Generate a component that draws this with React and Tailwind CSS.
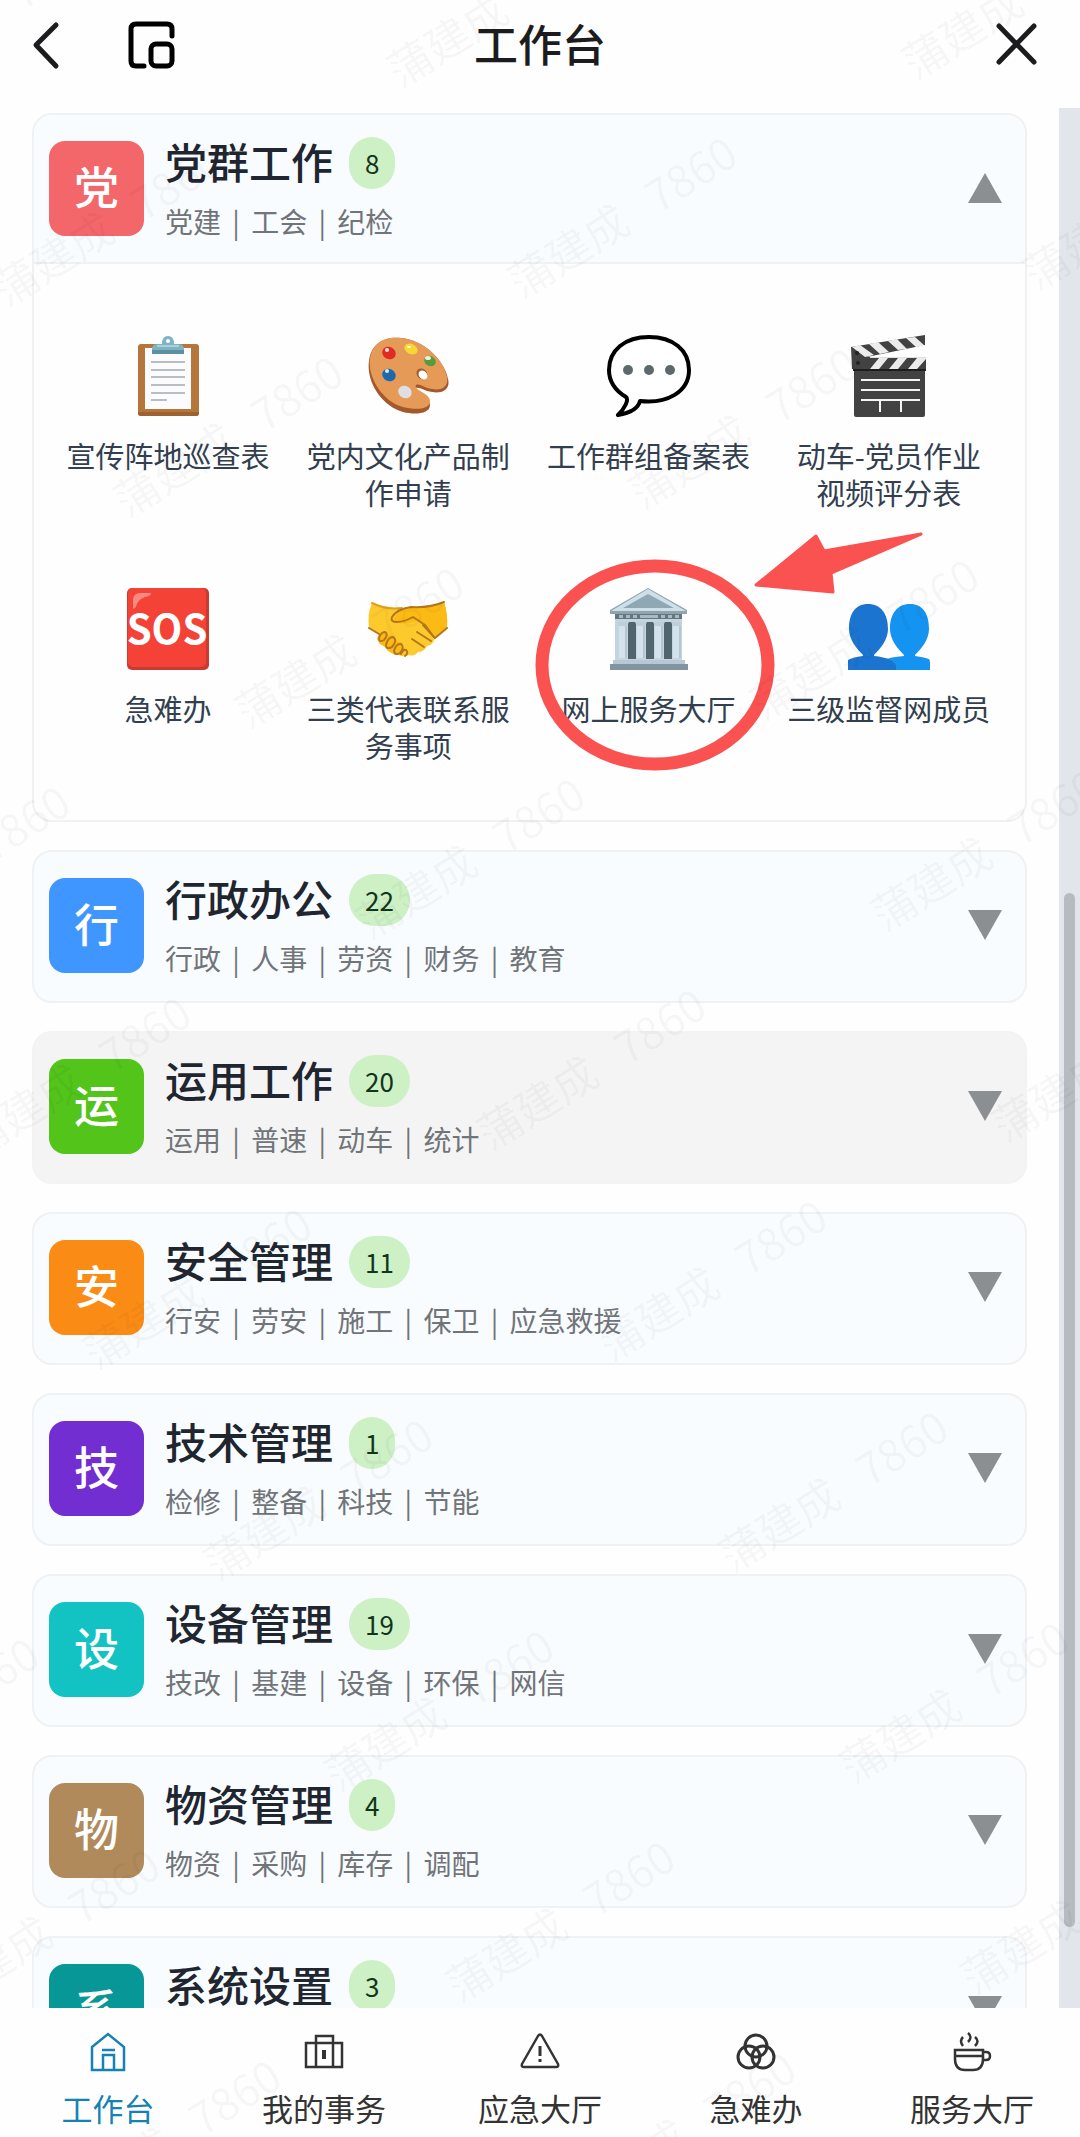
import clsx from "clsx";

const ClipboardIcon = () => (
  <svg viewBox="0 0 82 82" className="size-[82px]" aria-hidden="true">
    <rect x="11" y="9" width="61" height="72" rx="3" fill="#b5763b" />
    <path d="M11 77h61v1a3 3 0 0 1-3 3H14a3 3 0 0 1-3-3z" fill="#9c6330" />
    <rect x="18" y="13" width="46" height="61" fill="#fcfcfe" />
    <g stroke="#b9bec5" strokeWidth="2">
      <path d="M24 27h34M24 35h34M24 42h34M24 50h34M24 58h34M24 65h16" />
    </g>
    <path d="M25 19v-5q0-5 6-5h4q0-8 6-8t6 8h4q6 0 6 5v5z" fill="#7fb3c2" />
    <path d="M25 15h32v4H25z" fill="#5b90a1" />
    <circle cx="41" cy="6" r="2" fill="#fff" />
    <path d="M30 11h22" stroke="#a9d2dc" strokeWidth="2" />
  </svg>
);

const PaletteIcon = () => (
  <svg viewBox="0 0 82 82" className="size-[82px]" aria-hidden="true">
    <path
      d="M2 26C4 8 18 1 34 3c22 2 43 21 47 41 3 11-7 15-16 13-8-1-12-5-16-4-2 5 14 8 14 17 0 9-15 10-27 7C15 71-1 47 2 26z"
      fill="#a4592b"
    />
    <path
      d="M3 23C6 7 18 1 34 3c22 2 42 20 46 39 2 10-6 14-15 12-8-1-12-6-16-4-3 5 14 8 14 16 0 9-15 9-27 6C16 67 0 42 3 23z"
      fill="#e59a57"
    />
    <ellipse cx="22" cy="18" rx="7" ry="6" fill="#e02b25" transform="rotate(30 22 18)" />
    <ellipse cx="44" cy="14" rx="7" ry="5" fill="#f7d733" transform="rotate(25 44 14)" />
    <ellipse cx="63" cy="26" rx="6" ry="5" fill="#589a3c" transform="rotate(30 63 26)" />
    <ellipse cx="22" cy="40" rx="7" ry="6" fill="#1c69ad" transform="rotate(30 22 40)" />
    <ellipse cx="38" cy="57" rx="7" ry="6" fill="#dedfe2" transform="rotate(30 38 57)" />
    <ellipse cx="55" cy="39" rx="6" ry="5" fill="#a4592b" transform="rotate(45 55 39)" />
    <ellipse cx="56" cy="40" rx="5" ry="4" fill="#fff" transform="rotate(45 56 40)" />
    <g fill="#fff" opacity=".85">
      <ellipse cx="20" cy="15" rx="2" ry="2" />
      <ellipse cx="42" cy="12" rx="2" ry="1" />
      <ellipse cx="61" cy="23" rx="3" ry="2" />
      <ellipse cx="20" cy="36" rx="2" ry="2" />
    </g>
  </svg>
);

const SpeechIcon = () => (
  <svg viewBox="0 0 86 82" className="h-[82px] w-[86px]" aria-hidden="true">
    <path
      d="M43 2C19 2 3 15 3 35c0 13 7 21 17 27 3 3-1 11-8 18 12-2 20-6 22-14 27 3 49-9 49-31C83 15 67 2 43 2z"
      fill="#fff"
      stroke="#000"
      strokeWidth="4"
      strokeLinejoin="round"
    />
    <g fill="#5d696b">
      <circle cx="22" cy="35" r="5" />
      <circle cx="43" cy="35" r="5" />
      <circle cx="64" cy="35" r="5" />
    </g>
  </svg>
);

const ClapperIcon = () => (
  <svg viewBox="0 0 82 82" className="size-[82px]" aria-hidden="true">
    <path d="M3 12L77 0v10L19 22v12H4z" fill="#424242" />
    <path d="M5 22h73v12H5z" fill="#424242" />
    <path d="M6 34h71v46q0 2-2 2H8q-2 0-2-2z" fill="#424242" />
    <path
      d="M4 12l8-2 14 10-9 2zM21 9l9-2 11 10-9 2zM40 6l9-2 10 10-9 1zM58 3l9-1 10 9-9 1z"
      fill="#ececec"
    />
    <path d="M78 12v10H22z" fill="#fff" />
    <path d="M31 23h9l-9 11h-9zM50 23h9l-9 11h-9zM69 23h9v1l-9 10h-9z" fill="#ececec" />
    <path d="M22 22h56v1H22z" fill="#e0e0e0" />
    <circle cx="9" cy="18" r="2" fill="#222" />
    <circle cx="10" cy="28" r="2" fill="#222" />
    <path d="M5 35h73" stroke="#1d1d1d" strokeWidth="2" />
    <path d="M13 45h59M13 55h59M13 65h59M32 65v12M53 65v12" stroke="#f5f5f5" strokeWidth="2" fill="none" />
  </svg>
);

const SosIcon = () => (
  <svg viewBox="0 0 82 82" className="size-[82px]" aria-hidden="true">
    <rect width="82" height="82" rx="5" fill="#c93a32" />
    <rect x="1" width="78" height="79" rx="5" fill="#f44336" />
    <path d="M6 21V11q1-6 7-6h11q0 3-6 4-8 3-9 10z" fill="#fa8a80" />
    <text
      x="40"
      y="56"
      textAnchor="middle"
      fontSize="40"
      fontWeight="700"
      fill="#fff"
      fontFamily="'Noto Sans CJK SC', sans-serif"
    >
      SOS
    </text>
  </svg>
);

const HandshakeIcon = () => (
  <svg viewBox="0 0 82 82" className="size-[82px]" aria-hidden="true">
    <path
      d="M5 15q14 7 30 5l10-1q18 1 32-5 4 12 3 26l-13 12q-1 5-7 6-3 6-9 6-4 5-9 3-7 3-12-1-8-1-9-6-6-2-6-7-5-2-3-7L2 40Q0 26 5 15z"
      fill="#fdca2e"
    />
    <path d="M44 19q19 1 33-5 4 12 3 26l-11 8-12-11-6-5q-8 4-20 3-6-1-4-5 6-9 17-11z" fill="#fcbb14" />
    <path d="M12 46l5-3 4 4 6 1 2 5 5 1 1 5 3 2-2 5-8 1-7-4-3-4-5-3-3-5z" fill="#fbb913" />
    <g fill="none" stroke="#b5761a" strokeWidth="2" strokeLinecap="round" strokeLinejoin="round">
      <path d="M5 15q14 7 30 5" stroke="#e0a01c" />
      <path d="M77 14q-14 6-33 5-14 2-19 10-2 5 5 5 7 0 16-5l12 8 9 12" />
      <path d="M56 37l11 12M50 44l14 9M45 51l12 8" />
      <path d="M12 50q2-6 6-6 4 2-1 8-5 3-5-2zM19 57q2-8 7-8 5 3-1 10-6 3-6-2zM27 63q2-8 7-7 4 3-1 9-5 3-6-2zM34 66q2-5 5-4 3 3-1 6" />
      <path d="M80 40L68 50M2 40l10 6" />
    </g>
  </svg>
);

const BankIcon = () => (
  <svg viewBox="0 0 82 82" className="size-[82px]" aria-hidden="true">
    <path d="M7 26h67v50H7z" fill="#c4d5e0" />
    <path d="M20 34h8v37h-8zM38 34h8v37h-8zM56 34h8v37h-8z" fill="#51656f" />
    <path d="M11 38h8v32h-8zM29 38h8v32h-8zM47 38h8v32h-8zM65 38h8v32h-8z" fill="#d3e2ec" />
    <path d="M17 38h2v32h-2zM35 38h2v32h-2zM53 38h2v32h-2zM71 38h2v32h-2z" fill="#b3c6d2" />
    <path d="M9 34h12l-2 4h-8zM27 34h12l-2 4h-8zM45 34h12l-2 4h-8zM63 34h11l-2 4h-7z" fill="#bccfdb" />
    <path d="M7 26h67v5H7z" fill="#63777f" />
    <path d="M11 27h4v3h-4zM18 27h4v3h-4zM25 27h4v3h-4zM32 27h18v3H32zM53 27h4v3h-4zM60 27h4v3h-4zM67 27h4v3h-4z" fill="#a7bac5" />
    <path d="M40 0L2 22v4h77v-4z" fill="#90a4ae" />
    <path d="M40 1L3 23h75z" fill="#cfdfe9" />
    <path d="M40 6L15 20h51z" fill="#90a7b5" />
    <path d="M5 72h72v4H5z" fill="#b5c8d4" />
    <path d="M2 76h78v6H2z" fill="#82949e" />
  </svg>
);

const PeopleIcon = () => (
  <svg viewBox="0 0 82 82" className="size-[82px]" aria-hidden="true">
    <path d="M62 16c13 0 19 10 19 25 0 11-8 20-14 26v1q8 1 14 3 1 1 1 4v7H36V72q6-3 20-4v-1c-6-6-14-15-14-26 0-15 7-25 20-25z" fill="#1593f0" />
    <path d="M20 16c13 0 20 10 20 25 0 11-8 20-14 26v1q20 2 22 10v4H0V72q5-3 15-4v-1C9 61 1 52 1 41c0-15 6-25 19-25z" fill="#1b74d0" />
  </svg>
);

const HomeIcon = () => (
  <svg viewBox="0 0 36 40" className="h-10 w-9" fill="none" stroke="currentColor" strokeWidth="2.5" aria-hidden="true">
    <path d="M2 15L18 2l16 13v23H2z" />
    <path d="M13 38V23h11v15M12 18h13" />
  </svg>
);

const BriefcaseIcon = () => (
  <svg viewBox="0 0 40 40" className="size-10" fill="none" stroke="currentColor" strokeWidth="2.5" aria-hidden="true">
    <path d="M2 11h36v24H2zM12 35V4h17v31" />
    <path d="M20 18v9" strokeWidth="4" />
  </svg>
);

const WarningIcon = () => (
  <svg viewBox="0 0 40 40" className="size-10" fill="none" stroke="currentColor" strokeWidth="2.5" strokeLinejoin="round" aria-hidden="true">
    <path d="M18 4q2-3 4 0l16 28q1 3-2 3H4q-3 0-2-3z" />
    <path d="M20 14v10M20 27v3" strokeWidth="3" />
  </svg>
);

const CirclesIcon = () => (
  <svg viewBox="0 0 40 40" className="size-10" fill="none" stroke="currentColor" strokeWidth="3" aria-hidden="true">
    <circle cx="20" cy="14" r="11" />
    <circle cx="13" cy="25" r="11" />
    <circle cx="27" cy="25" r="11" />
  </svg>
);

const CupIcon = () => (
  <svg viewBox="0 0 40 40" className="size-10" fill="none" stroke="currentColor" strokeWidth="2.5" aria-hidden="true">
    <path d="M3 18h28v9q0 11-10 11h-8Q3 38 3 27zM3 24h28M31 20h3q4 0 4 4t-4 4h-3" />
    <path d="M11 5q-4 4 0 9M16 1q5 4 0 9M23 5q5 4 0 9" />
  </svg>
);

const apps = [
  { name: "宣传阵地巡查表", Icon: ClipboardIcon },
  { name: "党内文化产品制作申请", Icon: PaletteIcon },
  { name: "工作群组备案表", Icon: SpeechIcon },
  { name: "动车-党员作业视频评分表", Icon: ClapperIcon },
  { name: "急难办", Icon: SosIcon },
  { name: "三类代表联系服务事项", Icon: HandshakeIcon },
  { name: "网上服务大厅", Icon: BankIcon, marked: true },
  { name: "三级监督网成员", Icon: PeopleIcon },
];

const groups = [
  { title: "党群工作", count: 8, tags: ["党建", "工会", "纪检"], color: "bg-[#f3676a]", apps },
  { title: "行政办公", count: 22, tags: ["行政", "人事", "劳资", "财务", "教育"], color: "bg-[#4096ff]" },
  { title: "运用工作", count: 20, tags: ["运用", "普速", "动车", "统计"], color: "bg-[#52c41a]", pressed: true },
  { title: "安全管理", count: 11, tags: ["行安", "劳安", "施工", "保卫", "应急救援"], color: "bg-[#fa8c16]" },
  { title: "技术管理", count: 1, tags: ["检修", "整备", "科技", "节能"], color: "bg-[#722ed1]" },
  { title: "设备管理", count: 19, tags: ["技改", "基建", "设备", "环保", "网信"], color: "bg-[#13c2c2]" },
  { title: "物资管理", count: 4, tags: ["物资", "采购", "库存", "调配"], color: "bg-[#b08a5b]" },
  { title: "系统设置", count: 3, tags: [], color: "bg-[#089797]" },
];

const tabs = [
  { name: "工作台", Icon: HomeIcon, active: true },
  { name: "我的事务", Icon: BriefcaseIcon },
  { name: "应急大厅", Icon: WarningIcon },
  { name: "急难办", Icon: CirclesIcon },
  { name: "服务大厅", Icon: CupIcon },
];

// watermark lattice, every row is shifted to the right of the one above
const marks = [];
for (let row = -1; row < 11; row++) {
  for (let col = -4; col < 4; col++) {
    const x = 500 + row * 121 + col * 515;
    const y = 4 + row * 211 - col * 8;
    if (x > -150 && x < 1230 && y > -100 && y < 2240) marks.push({ x, y });
  }
}

const Header = () => (
  <header className="flex h-[108px] shrink-0 items-start justify-between px-8 pt-[10px] text-[#1c1c1e]">
    <div className="flex w-40 items-center gap-[66px] pt-2.5">
      <button aria-label="返回">
        <svg viewBox="0 0 30 50" className="h-[50px] w-[30px]" fill="none" stroke="currentColor" strokeWidth="5" strokeLinecap="round" strokeLinejoin="round">
          <path d="M24 5L4 25l20 21" />
        </svg>
      </button>
      <button aria-label="小窗" className="shrink-0">
        <svg viewBox="0 0 50 50" className="size-[50px]" fill="none" stroke="#000" strokeWidth="5" strokeLinecap="round" strokeLinejoin="round">
          <path d="M44 16V9q0-5-5-5H8Q3 4 3 9v32q0 5 5 5h8" />
          <rect x="23" y="24" width="21" height="22" rx="5" />
        </svg>
      </button>
    </div>
    <h1 className="text-[44px] leading-[66px] font-medium">工作台</h1>
    <div className="flex w-40 justify-end pt-2.5">
      <button aria-label="关闭">
        <svg viewBox="0 0 62 50" className="h-[50px] w-[62px]" fill="none" stroke="currentColor" strokeWidth="5" strokeLinecap="round">
          <path d="M13 6l35 36M48 6L13 42" />
        </svg>
      </button>
    </div>
  </header>
);

const AppTile = ({ app }) => (
  <div className="relative flex flex-col items-center">
    <button className="flex w-full flex-col items-center px-4">
      <app.Icon />
      <span className="mt-5 text-[29px] leading-[37px] text-[#333f4f]">{app.name}</span>
    </button>
    {app.marked && (
      <svg viewBox="0 0 400 250" className="pointer-events-none absolute top-[-60px] left-[-2px] h-[250px] w-[400px] max-w-none" aria-hidden="true">
        <ellipse cx="128" cy="137" rx="113" ry="99" fill="none" stroke="#fa5151" strokeWidth="13" />
        <path
          d="M229 57l60-49 8 15 97-17-90 39 2 19z"
          fill="#fa5151"
          stroke="#fa5151"
          strokeWidth="3"
          strokeLinejoin="round"
        />
      </svg>
    )}
  </div>
);

const GroupCard = ({ group }) => {
  const open = Boolean(group.apps);

  return (
    <section
      className={clsx(
        "shrink-0 rounded-[20px] border-2",
        group.pressed ? "border-[#f3f3f4] bg-[#f4f4f5]" : "border-[#eff1f3]",
        !group.pressed && !open && "bg-[#f8fcff]"
      )}
    >
      <button
        aria-expanded={open}
        className={clsx(
          "flex h-[149px] w-full items-start pt-[26px] pr-[23px] pl-[15px] text-left",
          open && "rounded-t-[18px] border-b-2 border-[#eff1f3] bg-[#f8fcff]"
        )}
      >
        <span className={clsx("flex size-[95px] items-center justify-center rounded-2xl pb-1.5 text-[45px] leading-none font-medium text-white", group.color)}>
          {group.title[0]}
        </span>
        <span className="-mt-1 ml-[21px] flex flex-1 flex-col">
          <span className="flex items-center gap-4">
            <span className="pb-1 text-[42px] leading-[48px] font-medium text-[#1f2630]">{group.title}</span>
            <span className="rounded-full bg-[#cdf0c5] px-4 text-[26px] leading-[52px] text-[#12351a]">{group.count}</span>
          </span>
          <span className="mt-3.5 text-[28px] leading-9 text-[#717478]">
            {group.tags.map((tag, idx) => (
              <span key={tag}>
                {idx > 0 && <span className="px-[5px]"> | </span>}
                {tag}
              </span>
            ))}
          </span>
        </span>
        <svg viewBox="0 0 34 30" className={clsx("mt-8 h-[30px] w-[34px]", !open && "rotate-180")} aria-hidden="true">
          <path d="M17 0l17 30H0z" fill="#8b8f92" />
        </svg>
      </button>

      {open && (
        <div className="grid grid-cols-4 gap-y-[77px] pt-[71px] pr-4 pb-14 pl-3.5 text-center">
          {group.apps.map((app) => (
            <AppTile key={app.name} app={app} />
          ))}
        </div>
      )}
    </section>
  );
};

const App = () => {
  return (
    <div
      lang="zh-CN"
      className="relative flex h-screen flex-col overflow-hidden bg-[#fefefe] font-['Noto_Sans_CJK_SC',sans-serif]"
    >
      <Header />

      <div className="flex min-h-0 flex-1">
        <main className="flex min-w-0 flex-1 flex-col gap-7 overflow-hidden pt-[5px] pr-8 pl-8">
          {groups.map((group) => (
            <GroupCard key={group.title} group={group} />
          ))}
        </main>
        <div className="flex w-[21px] flex-col items-center bg-[#e2e5ec]">
          <div className="flex-[785]" />
          <div className="w-[11px] flex-[1034] rounded-full bg-[#b7bac0]" />
          <div className="flex-[81]" />
        </div>
      </div>

      <nav className="grid h-[129px] shrink-0 grid-cols-5 bg-[#fefefe]">
        {tabs.map(({ name, Icon, active }) => (
          <a
            key={name}
            href="#"
            className={clsx("flex flex-col items-center pt-6", active ? "text-[#1682b4]" : "text-[#333333]")}
          >
            <Icon />
            <span className="mt-4 text-[31px] leading-10">{name}</span>
          </a>
        ))}
      </nav>

      <div className="pointer-events-none absolute inset-0 overflow-hidden" aria-hidden="true">
        {marks.map(({ x, y }) => (
          <span
            key={`${x}_${y}`}
            style={{ left: x, top: y }}
            className="absolute -translate-x-1/2 -translate-y-1/2 -rotate-32 text-[44px] whitespace-pre text-black/4"
          >
            {"蒲建成   7860"}
          </span>
        ))}
      </div>
    </div>
  );
};

export default App;
